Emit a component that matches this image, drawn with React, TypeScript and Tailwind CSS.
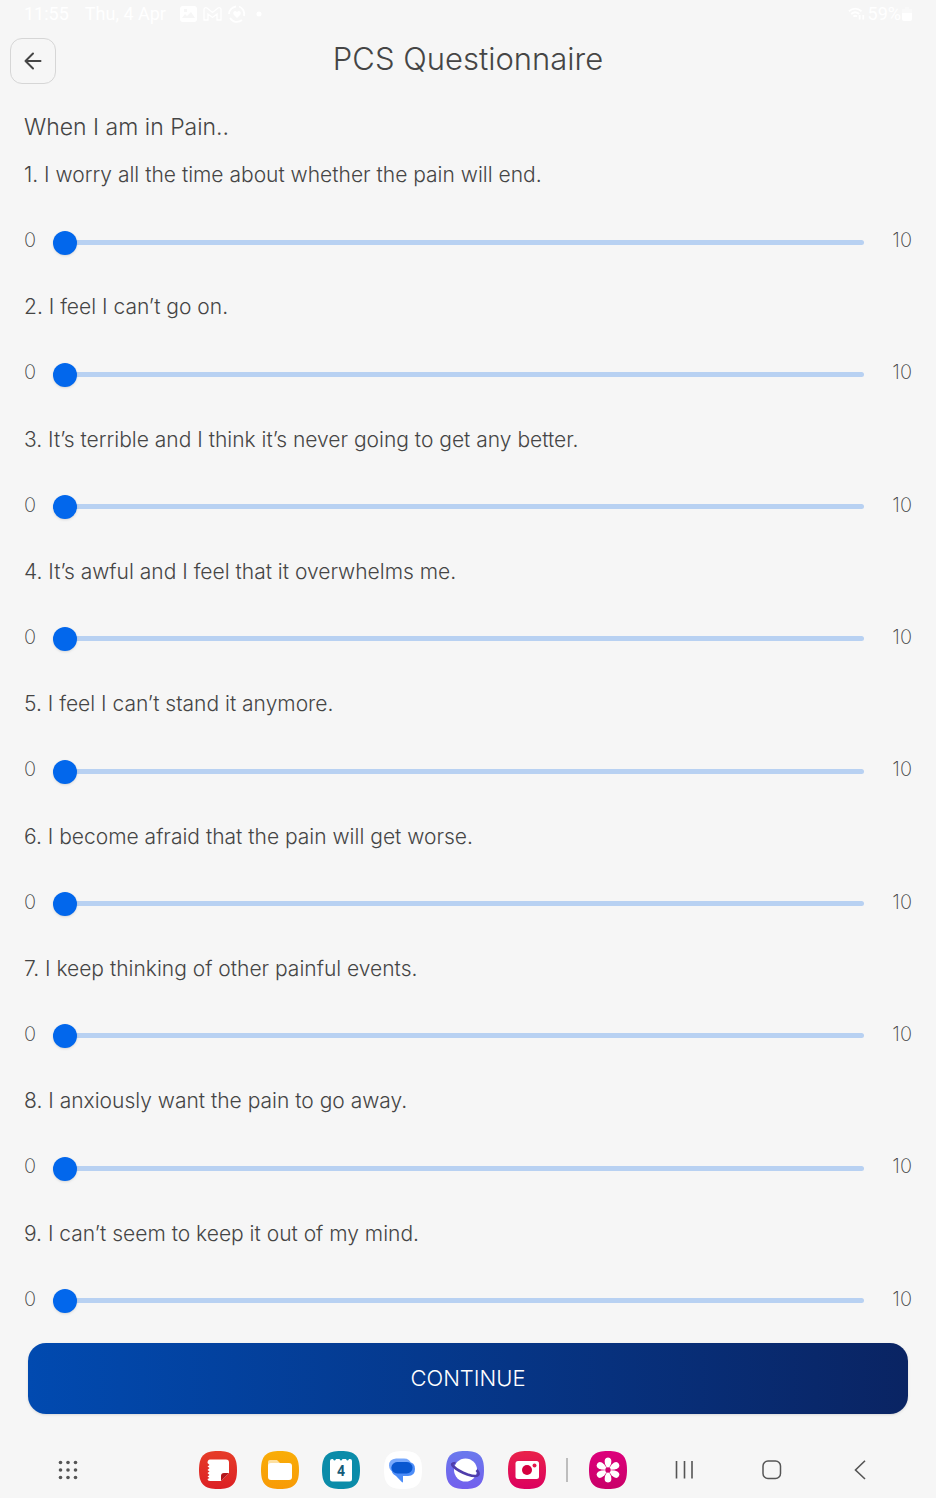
import { useState } from "react";
import type { ReactNode } from "react";

const questions = [
  "I worry all the time about whether the pain will end.",
  "I feel I can’t go on.",
  "It’s terrible and I think it’s never going to get any better.",
  "It’s awful and I feel that it overwhelms me.",
  "I feel I can’t stand it anymore.",
  "I become afraid that the pain will get worse.",
  "I keep thinking of other painful events.",
  "I anxiously want the pain to go away.",
  "I can’t seem to keep it out of my mind.",
];

const squircle = "M19 0C33 0 38 5 38 19S33 38 19 38S0 33 0 19S5 0 19 0Z";

function StatusBar() {
  return (
    <div className="flex h-7 items-center justify-between px-6 font-[Roboto,sans-serif] text-lg leading-7 font-normal text-white">
      <div className="flex items-center">
        <span>11:55</span>
        <span className="ml-4">Thu, 4 Apr</span>
        <svg className="ml-3.5" width="84" height="20" viewBox="0 0 84 20" fill="none" stroke="white" strokeWidth="1.800">
          <path fill="white" stroke="none" fillRule="evenodd" d="M3 2H14Q17 2 17 5V15Q17 18 14 18H3Q0 18 0 15V5Q0 2 3 2ZM2 14H15L11 8L7 12L5 10ZM4 5V8H7V5Z" />
          <path strokeWidth="1.300" d="M24 16V5Q25 3 27 4L32.500 8.500L38 4Q40 3 41 5V16H37V10L32.500 13.500L28 10V16Z" />
          <path d="M59 2.500A8 8 0 0 1 64 12M62 16A8 8 0 0 1 50 14M49 10A8 8 0 0 1 56 2.500" />
          <path fill="white" stroke="none" d="M57 14L53.500 10.500Q52.500 7 55.500 7L57 8L58.500 7Q61.500 7 60.500 10.500Z" />
          <circle cx="79" cy="10" r="2.500" fill="white" stroke="none" />
        </svg>
      </div>
      <div className="flex items-center">
        <svg width="18" height="16" viewBox="0 0 20 16" fill="none" stroke="white" strokeWidth="2">
          <path d="M1 5Q8 -1 15 5M3.500 8Q8 4 12.500 8M6 11Q8 9 10 11M13 9V14M17 14V9" />
        </svg>
        <span className="ml-0.5">59%</span>
        <svg className="ml-px" width="10" height="14" viewBox="0 0 10 14" fill="white">
          <path opacity=".4" d="M3 0H7V2H10V7H0V2H3Z" />
          <path d="M0 6H10V12Q10 14 8 14H2Q0 14 0 12Z" />
        </svg>
      </div>
    </div>
  );
}

function Question({ index, text }: { index: number; text: string }) {
  const [value, setValue] = useState(0);
  const id = `question-${index}`;
  return (
    <li className="pt-2">
      <label htmlFor={id} className="block text-[21px] leading-8">
        {index}. {text}
      </label>
      <div className="mt-[27px] flex h-12 items-center">
        <span className="w-[29px] pb-1 text-xl font-extralight">0</span>
        <input
          id={id}
          type="range"
          min={0}
          max={10}
          value={value}
          onChange={(e) => setValue(Number(e.target.value))}
          className="h-6 min-w-0 flex-1 cursor-pointer appearance-none bg-transparent [&::-webkit-slider-runnable-track]:h-[5px] [&::-webkit-slider-runnable-track]:rounded-full [&::-webkit-slider-runnable-track]:bg-[#b8d1f2] [&::-webkit-slider-thumb]:-mt-[9px] [&::-webkit-slider-thumb]:size-6 [&::-webkit-slider-thumb]:appearance-none [&::-webkit-slider-thumb]:rounded-full [&::-webkit-slider-thumb]:bg-[#0267ec] [&::-webkit-slider-thumb]:shadow-sm"
        />
        <span className="w-12 pb-1 text-right text-xl font-extralight">10</span>
      </div>
    </li>
  );
}

function AppIcon({ label, color, children }: { label: string; color: string; children: ReactNode }) {
  return (
    <button type="button" aria-label={label} className="shrink-0">
      <svg width="38" height="38" viewBox="0 0 38 38">
        <defs>
          <linearGradient id="notes" x2="0" y2="1"><stop stopColor="#e63c28" /><stop offset="1" stopColor="#dc2024" /></linearGradient>
          <linearGradient id="files" x2="0" y2="1"><stop stopColor="#f9ad08" /><stop offset="1" stopColor="#f89a05" /></linearGradient>
          <linearGradient id="web" x2="0" y2="1"><stop stopColor="#6a79ed" /><stop offset="1" stopColor="#735fed" /></linearGradient>
          <linearGradient id="camera" x2="0" y2="1"><stop stopColor="#e92249" /><stop offset="1" stopColor="#dc005f" /></linearGradient>
          <linearGradient id="gallery" x2="0" y2="1"><stop stopColor="#dd007b" /><stop offset="1" stopColor="#c90068" /></linearGradient>
        </defs>
        <path d={squircle} fill={color} />
        {children}
      </svg>
    </button>
  );
}

function NavigationBar() {
  return (
    <nav className="flex h-[57px] items-center pr-[66px] pl-[58px]">
      <button type="button" aria-label="All apps">
        <svg width="20" height="20" viewBox="0 0 20 20" fill="#555">
          {[2.5, 10, 17.5].map((y) => [2.5, 10, 17.5].map((x) => <circle key={`${x}-${y}`} cx={x} cy={y} r="1.800" />))}
        </svg>
      </button>
      <div className="mr-[47px] ml-[121px] flex flex-1 items-center justify-between">
        <AppIcon label="Notes" color="url(#notes)">
          <path fill="white" d="M11 8.500H27Q30 8.500 30 11.500V22L22 30H11Q8.500 30 8.500 28L10.500 27L8.500 25.500L10.500 24L8.500 22L10.500 20.500L8.500 19L10.500 17L8.500 15.500L10.500 14L8.500 12Q8.500 8.500 11 8.500Z" />
          <path fill="#b3161b" d="M30 22L22 30V25Q22 22 25 22Z" />
        </AppIcon>
        <AppIcon label="Files" color="url(#files)">
          <path fill="#fde0a2" d="M7 16V11Q7 9 9 9H16L19 12V16Z" />
          <rect x="7" y="12" width="24" height="17" rx="3" fill="white" />
        </AppIcon>
        <AppIcon label="Calendar" color="#0b8ca9">
          <path fill="white" d="M10 8H11Q12.500 11 14 8H17.500Q19 11 20.500 8H24Q25.500 11 27 8H28Q30 8 30 10V28Q30 30.500 27.500 30.500H10.500Q8 30.500 8 28V10Q8 8 10 8Z" />
          <text x="19" y="25" textAnchor="middle" fontSize="14" fontWeight="700" fontFamily="Roboto, sans-serif" fill="#155b78">4</text>
        </AppIcon>
        <AppIcon label="Messages" color="#fff">
          <path fill="#79a9fc" d="M12 7.500H20Q26 7.500 27 13L25 21H11Q5 20 5 14.500Q5 8 12 7.500Z" />
          <path fill="#4d8df8" d="M13 11H24Q31 11 31 18Q31 25 24 25H19V30.500Q19 32 17.800 31L12 25Q7 22 7 17Q8 12 13 11Z" />
          <rect x="7.500" y="11" width="21" height="11.500" rx="5.750" fill="#0957d0" />
        </AppIcon>
        <AppIcon label="Internet" color="url(#web)">
          <circle cx="19.500" cy="19" r="11.500" fill="white" />
          <path fill="none" stroke="#4f3dab" strokeWidth="2.600" d="M9.500 12Q4 12 7.500 15.500Q12 20 21.500 23.500Q31 26.500 32.500 23.500Q33 21.500 30.500 19" />
        </AppIcon>
        <AppIcon label="Camera" color="url(#camera)">
          <rect x="7.500" y="10" width="23.500" height="18" rx="2.500" fill="white" />
          <circle cx="19" cy="19" r="5" fill="#d5003f" />
          <circle cx="26.500" cy="14.500" r="2" fill="#e6184a" />
        </AppIcon>
        <span className="-mx-[3px] h-6 w-0.5 bg-[#bdbdbd]" />
        <AppIcon label="Gallery" color="url(#gallery)">
          {[0, 60, 120, 180, 240, 300].map((a) => (
            <path key={a} fill="white" transform={`rotate(${a} 19 19)`} d="M19 19L16 13Q14.500 6.500 19 6.500T22 13Z" />
          ))}
          <circle cx="19" cy="19" r="2.700" fill="#d30070" />
        </AppIcon>
      </div>
      <div className="flex gap-[68px]">
        <button type="button" aria-label="Recent apps">
          <svg width="20" height="20" viewBox="0 0 20 20" stroke="#555" strokeWidth="1.600"><path d="M2.500 1V18.500M10.500 1V18.500M18 1V18.500" /></svg>
        </button>
        <button type="button" aria-label="Home">
          <svg width="20" height="20" viewBox="0 0 20 20" fill="none" stroke="#555" strokeWidth="1.500"><rect x="1" y="1" width="17.500" height="17.500" rx="5" /></svg>
        </button>
        <button type="button" aria-label="Back">
          <svg width="20" height="20" viewBox="0 0 20 20" fill="none" stroke="#555" strokeWidth="1.600"><path d="M15 .8L5.500 10L15 19" /></svg>
        </button>
      </div>
    </nav>
  );
}

export default function App() {
  return (
    <div className="flex min-h-screen flex-col border-r border-b-2 border-white bg-[#f6f6f6] font-[Inter,sans-serif] font-light text-[#454545]">
      <StatusBar />
      <header className="grid grid-cols-[1fr_auto_1fr] items-start px-2.5 pt-2.5">
        <button type="button" aria-label="Go back" className="flex size-[46px] items-center justify-center rounded-xl border border-[#d6d6d6]">
          <svg width="18" height="18" viewBox="0 0 18 18" fill="none" stroke="#454545" strokeWidth="2" strokeLinecap="round" strokeLinejoin="round">
            <path d="M16.500 9H1.500M9 1.500L1.500 9L9 16.500" />
          </svg>
        </button>
        <h1 className="text-[31px] leading-[42px]">PCS Questionnaire</h1>
      </header>
      <main className="flex flex-1 flex-col px-6 pt-[27px]">
        <h2 className="text-[23px] leading-8">When I am in Pain..</h2>
        <ol className="mt-2 grid flex-1 auto-rows-fr">
          {questions.map((text, i) => (
            <Question key={text} index={i + 1} text={text} />
          ))}
        </ol>
      </main>
      <footer>
        <div className="px-7 pt-px pb-[27px]">
          <button type="button" className="block h-[71px] w-full rounded-[18px] bg-linear-to-r/srgb from-[#014ab0] to-[#0a2463] text-[22px] text-white shadow-sm">
            CONTINUE
          </button>
        </div>
        <NavigationBar />
      </footer>
    </div>
  );
}
